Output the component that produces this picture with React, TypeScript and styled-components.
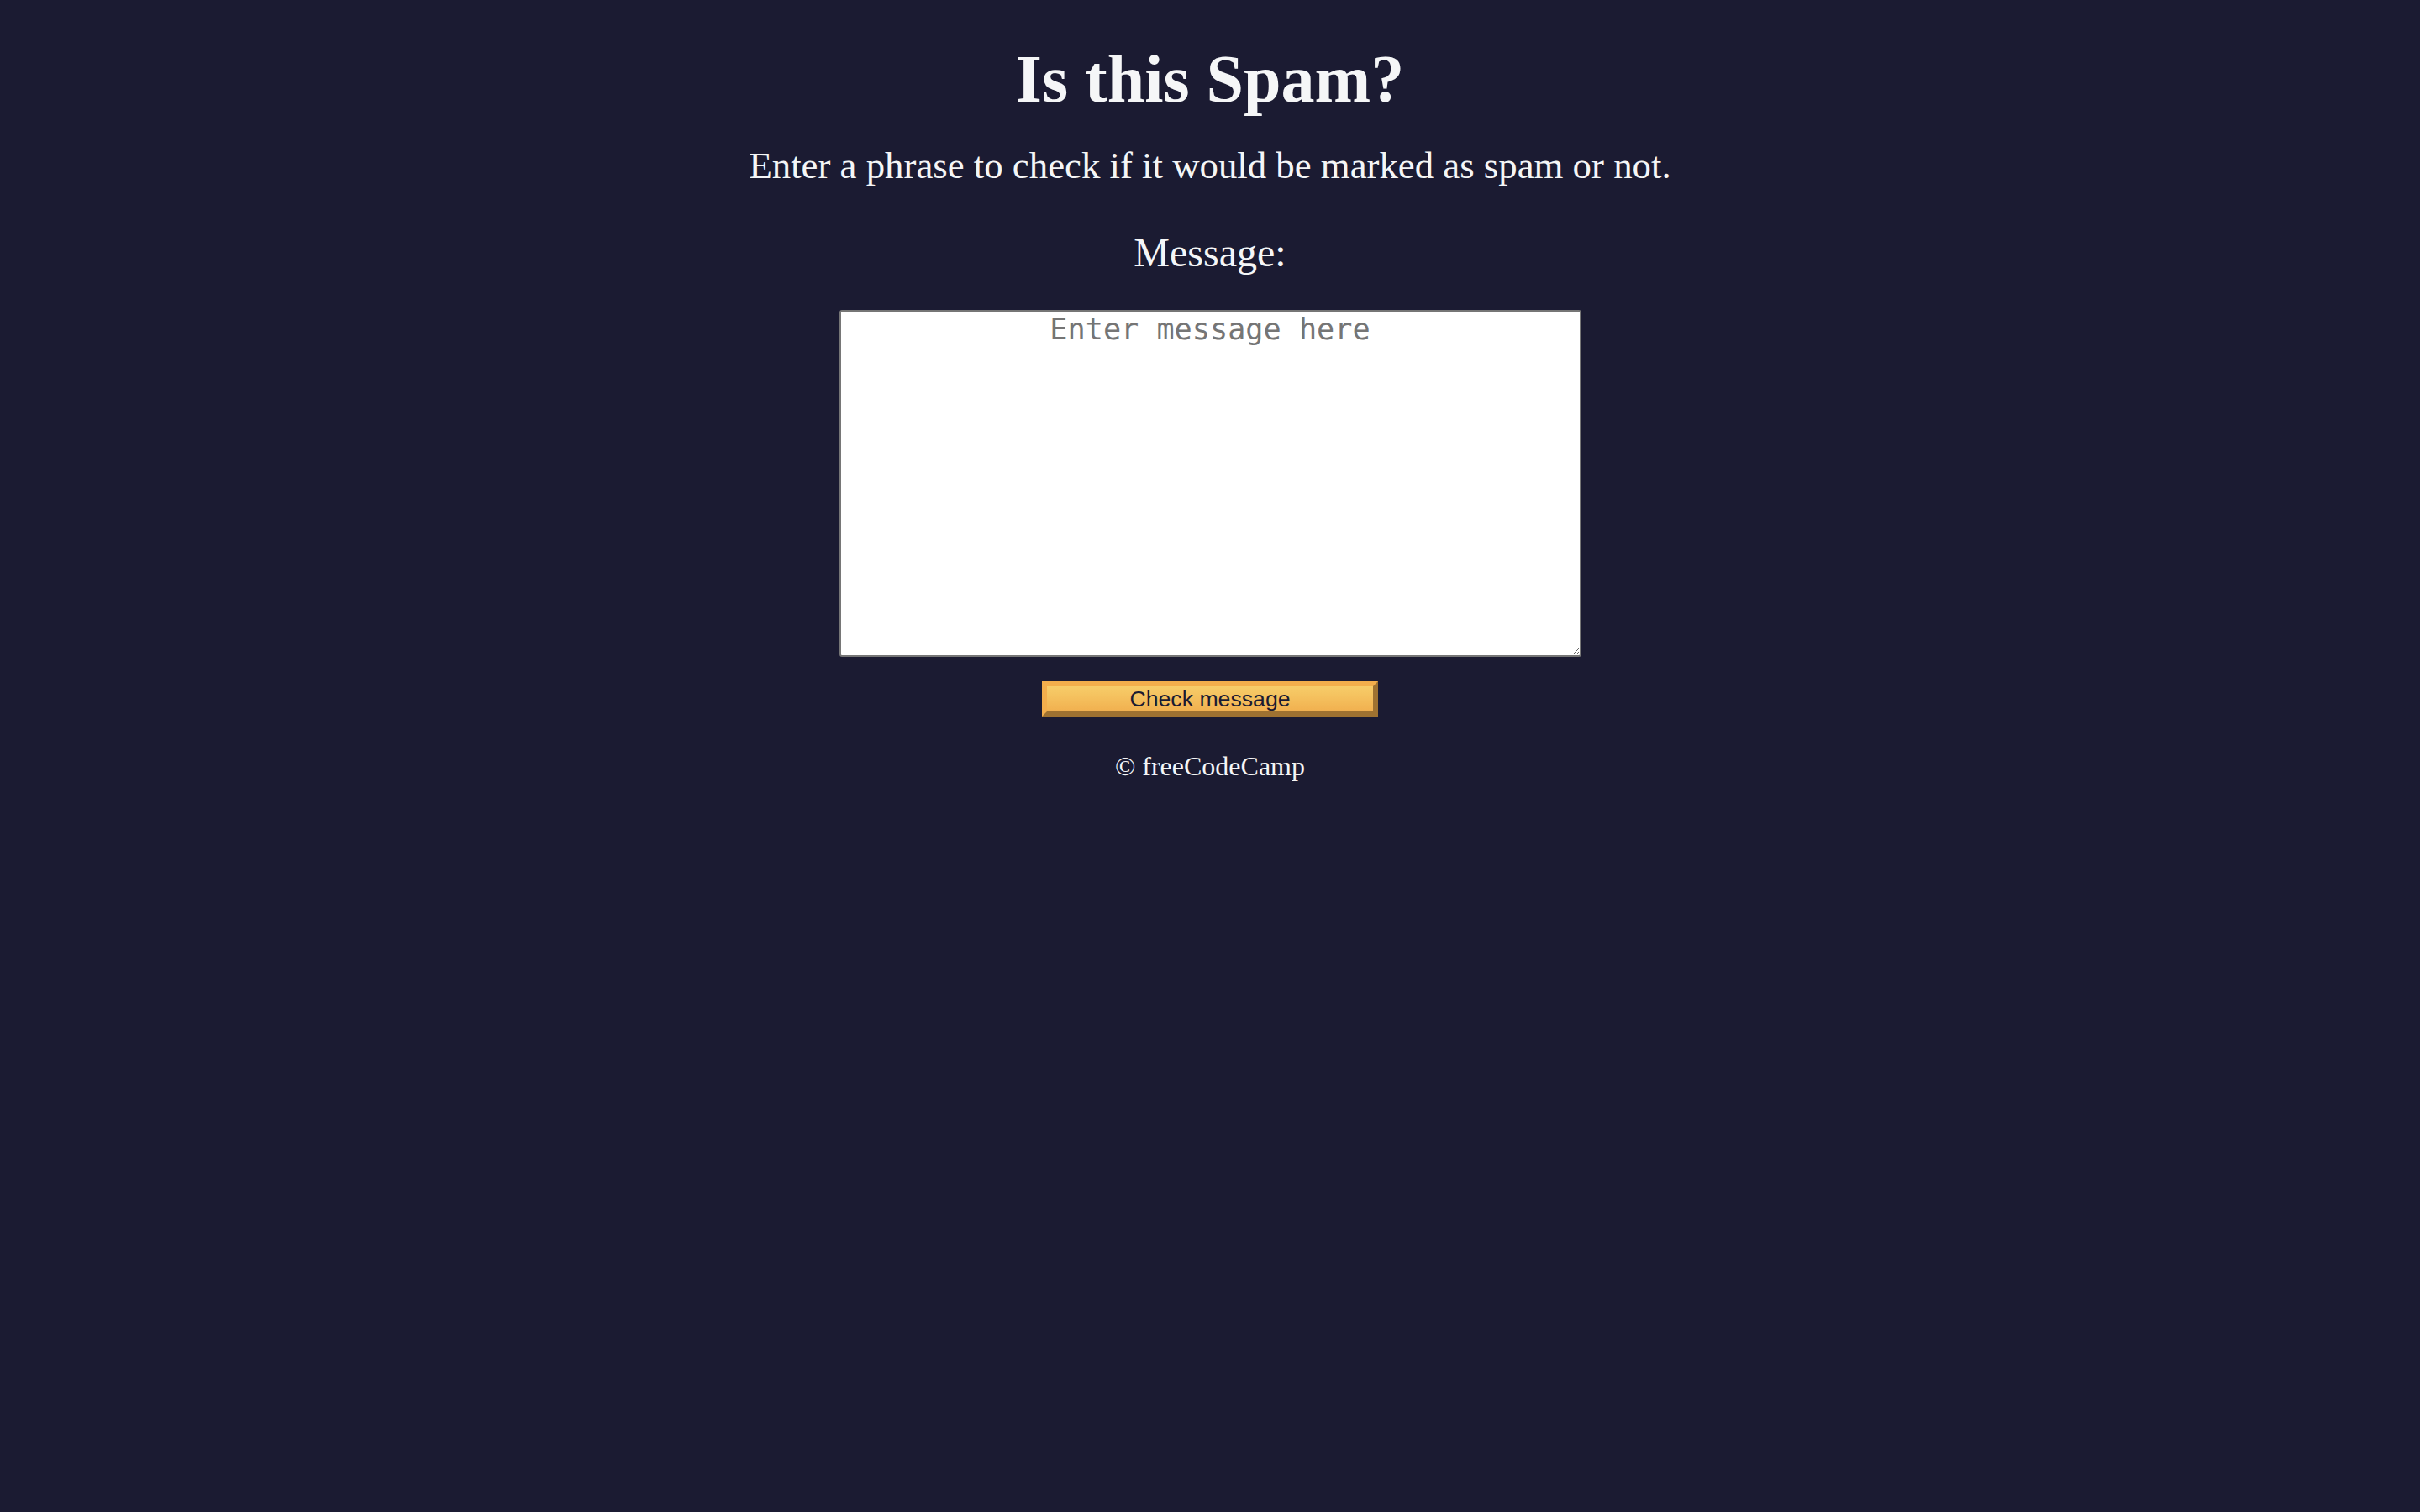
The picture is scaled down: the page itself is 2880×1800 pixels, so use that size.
import React from "react";
import styled, { createGlobalStyle } from "styled-components";

const GlobalStyle = createGlobalStyle`
  html, body {
    margin: 0;
    padding: 0;
    background: #1b1b32;
  }
  body {
    color: #f5f6f7;
    font-family: "Liberation Serif", "Times New Roman", serif;
    min-height: 100vh;
  }
`;

const Page = styled.main`
  display: flex;
  flex-direction: column;
  align-items: center;
  text-align: center;
  min-height: 1800px;
  background: #1b1b32;
`;

const Title = styled.h1`
  margin: 49px 0 0;
  font-size: 80px;
  font-weight: 700;
  line-height: normal;
`;

const Subtitle = styled.p`
  margin: 30.5px 0 0;
  font-size: 44.8px;
  line-height: normal;
`;

const Form = styled.form`
  display: flex;
  flex-direction: column;
  align-items: center;
  margin-top: 50px;
`;

const Label = styled.label`
  display: block;
  font-size: 48px;
  line-height: normal;
`;

const MessageInput = styled.textarea`
  display: block;
  box-sizing: border-box;
  width: 883px;
  height: 413px;
  margin-top: 41px;
  padding: 0 4px;
  border: 2px solid #767676;
  border-radius: 3px;
  background: #ffffff;
  color: #1b1b32;
  font-family: "DejaVu Sans Mono", "Liberation Mono", monospace;
  font-size: 35.2px;
  text-align: center;
  &::placeholder {
    color: #757575;
  }
`;

const CheckButton = styled.button`
  box-sizing: border-box;
  width: 400px;
  height: 42px;
  margin-top: 29px;
  padding: 0 12px;
  border: 6px outset #f3ae4c;
  background-color: #f3ae4c;
  background-image: linear-gradient(#f7cd69, #f1b04f);
  color: #1b1b32;
  font-family: "Liberation Sans", Arial, sans-serif;
  font-size: 26.67px;
  line-height: normal;
  cursor: pointer;
`;

const Footer = styled.footer`
  margin-top: 41px;
  font-size: 32px;
  line-height: normal;
`;

export default function App() {
  return (
    <>
      <GlobalStyle />
      <Page>
        <Title>Is this Spam?</Title>
        <Subtitle>Enter a phrase to check if it would be marked as spam or not.</Subtitle>
        <Form onSubmit={(e) => e.preventDefault()}>
          <Label htmlFor="message-input">Message:</Label>
          <MessageInput id="message-input" placeholder="Enter message here" />
          <CheckButton type="button">Check message</CheckButton>
        </Form>
        <Footer>© freeCodeCamp</Footer>
      </Page>
    </>
  );
}
